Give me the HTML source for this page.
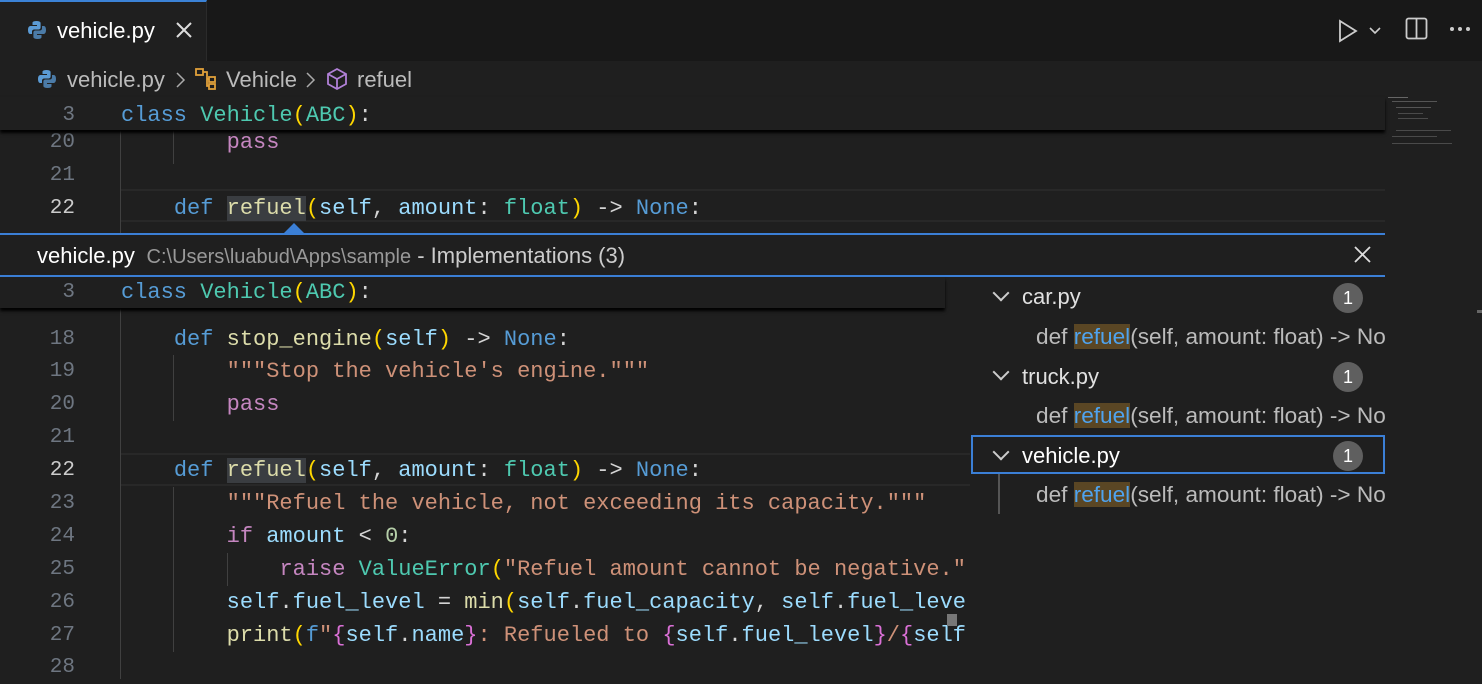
<!DOCTYPE html>
<html><head><meta charset="utf-8"><style>
*{margin:0;padding:0;box-sizing:border-box}
body{width:1482px;height:679px;background:#1f1f1f;overflow:hidden;position:relative;font-family:"Liberation Sans",sans-serif;color:#ccc}
.a{position:absolute}
.ln{position:absolute;width:75px;text-align:right;font:21px/33px "Liberation Mono",monospace;color:#6e7681;left:0}
.cd{position:absolute;left:121px;font:22px/33px "Liberation Mono",monospace;white-space:pre;color:#d4d4d4}
.k{color:#569cd6}.c{color:#4ec9b0}.f{color:#dcdcaa}.p{color:#9cdcfe}.s{color:#ce9178}.m{color:#c586c0}.y{color:#ffd700}.b{color:#da70d6}
.hl{background:#3a3d41}
.g{position:absolute;width:1px;background:#404040}
.tr{position:absolute;left:1022px;font-size:22px;color:#e0e0e0;line-height:36px}
.tc{position:absolute;left:1036px;font-size:22.6px;color:#bbb;line-height:36px;white-space:nowrap;width:349px;overflow:hidden}
.rf{color:#4fa3ee;background:#5a4624}
.bd{position:absolute;left:1333px;width:30px;height:30px;border-radius:50%;background:#5f5f5f;color:#fff;font-size:18px;text-align:center;line-height:30px}
.chev{position:absolute;left:995px;width:12px;height:12px;border-right:2px solid #ccc;border-bottom:2px solid #ccc;transform:rotate(45deg)}
.sep{position:absolute;top:72px}
</style></head><body>
<div class="a" style="left:0;top:0;width:1482px;height:61px;background:#181818"></div>
<div class="a" style="left:0;top:0;width:207px;height:61px;background:#1f1f1f;border-top:2px solid #3b82d6;border-right:1px solid #2b2b2b"></div>
<svg class="a" style="left:27px;top:20px" width="20" height="20" viewBox="0 0 20 20"><path d="M9.5 1C5 1 5.5 3 5.5 3v2h4.5v1H3.5S1 5.8 1 10s2.2 4 2.2 4H5v-2.3S4.9 9.5 7.2 9.5h4.3s2.1 0 2.1-2.1V3.2S14 1 9.5 1z" fill="#5b9bd5"/><path d="M10.5 19c4.5 0 4-2 4-2v-2H10v-1h6.5s2.5.2 2.5-4-2.2-4-2.2-4H15v2.3s.1 2.2-2.2 2.2H8.5s-2.1 0-2.1 2.1v4.2S6 19 10.5 19z" fill="#5b9bd5" opacity=".75"/></svg>
<div class="a" style="left:57px;top:18px;font-size:22px;color:#fff">vehicle.py</div>
<svg class="a" style="left:175px;top:21px" width="18" height="18"><path d="M2 2L16 16M16 2L2 16" stroke="#ddd" stroke-width="2"/></svg>
<svg class="a" style="left:1337px;top:19px" width="50" height="24"><path d="M3 2 L19 12 L3 22 Z" fill="none" stroke="#ccc" stroke-width="1.8"/><path d="M33 9 l5 5 l5 -5" fill="none" stroke="#ccc" stroke-width="1.6"/></svg>
<svg class="a" style="left:1405px;top:17px" width="24" height="24"><rect x="1.5" y="1.5" width="20" height="20" rx="2" fill="none" stroke="#ccc" stroke-width="1.8"/><line x1="11.5" y1="2" x2="11.5" y2="21" stroke="#ccc" stroke-width="1.8"/></svg>
<svg class="a" style="left:1448px;top:25px" width="26" height="8"><circle cx="4" cy="4" r="2" fill="#ccc"/><circle cx="12" cy="4" r="2" fill="#ccc"/><circle cx="20" cy="4" r="2" fill="#ccc"/></svg>
<svg class="a" style="left:37px;top:69px" width="20" height="20" viewBox="0 0 20 20"><path d="M9.5 1C5 1 5.5 3 5.5 3v2h4.5v1H3.5S1 5.8 1 10s2.2 4 2.2 4H5v-2.3S4.9 9.5 7.2 9.5h4.3s2.1 0 2.1-2.1V3.2S14 1 9.5 1z" fill="#5b9bd5"/><path d="M10.5 19c4.5 0 4-2 4-2v-2H10v-1h6.5s2.5.2 2.5-4-2.2-4-2.2-4H15v2.3s.1 2.2-2.2 2.2H8.5s-2.1 0-2.1 2.1v4.2S6 19 10.5 19z" fill="#5b9bd5" opacity=".75"/></svg>
<div class="a" style="left:67px;top:67px;font-size:22px;color:#bbb">vehicle.py</div>
<svg class="sep" style="left:175px" width="12" height="16"><path d="M2 1l7 7-7 7" fill="none" stroke="#aaa" stroke-width="1.5"/></svg>
<svg class="a" style="left:194px;top:67px" width="26" height="24"><g fill="none" stroke="#e0a03a" stroke-width="1.8"><rect x="2" y="2" width="7" height="6"/><rect x="15" y="10" width="6" height="5"/><rect x="15" y="17" width="6" height="5"/><path d="M9 5h4v14h2M13 12h2"/></g></svg>
<div class="a" style="left:226px;top:67px;font-size:22px;color:#bbb">Vehicle</div>
<svg class="sep" style="left:305px" width="12" height="16"><path d="M2 1l7 7-7 7" fill="none" stroke="#aaa" stroke-width="1.5"/></svg>
<svg class="a" style="left:326px;top:67px" width="22" height="24"><g fill="none" stroke="#b180d7" stroke-width="1.8"><path d="M11 2 L20 7 L20 17 L11 22 L2 17 L2 7 Z"/><path d="M2 7 L11 12 L20 7 M11 12 V22"/></g></svg>
<div class="a" style="left:357px;top:67px;font-size:22px;color:#bbb">refuel</div>
<div class="g" style="left:120px;top:130px;height:103px"></div>
<div class="g" style="left:173px;top:130px;height:34px"></div>
<div class="a" style="left:121px;top:189px;width:1264px;height:33px;border-top:2px solid #282828;border-bottom:2px solid #282828"></div>
<div class="ln" style="top:126px">20</div><div class="cd" style="top:126px">        <span class="m">pass</span></div>
<div class="ln" style="top:159px">21</div>
<div class="ln" style="top:192px;color:#ccc">22</div><div class="cd" style="top:192px">    <span class="k">def</span> <span class="f hl">refuel</span><span class="y">(</span><span class="p">self</span>, <span class="p">amount</span>: <span class="c">float</span><span class="y">)</span> -&gt; <span class="k">None</span>:</div>
<div class="a" style="left:0;top:97px;width:1385px;height:33px;background:#1f1f1f;box-shadow:0 3px 3px #000"></div>
<div class="ln" style="top:99px">3</div><div class="cd" style="top:99px"><span class="k">class</span> <span class="c">Vehicle</span><span class="y">(</span><span class="c">ABC</span><span class="y">)</span>:</div>
<div class="a" style="left:1388px;top:97px;width:20px;height:1px;background:#666"></div>
<div class="a" style="left:1392px;top:101px;width:45px;height:1px;background:#555"></div>
<div class="a" style="left:1396px;top:107px;width:35px;height:1px;background:#555"></div>
<div class="a" style="left:1398px;top:113px;width:25px;height:1px;background:#4a4a4a"></div>
<div class="a" style="left:1398px;top:118px;width:30px;height:1px;background:#4a4a4a"></div>
<div class="a" style="left:1396px;top:130px;width:55px;height:1px;background:#4a4a4a"></div>
<div class="a" style="left:1392px;top:136px;width:45px;height:1px;background:#4a4a4a"></div>
<div class="a" style="left:1392px;top:143px;width:60px;height:1px;background:#4a4a4a"></div>
<div class="a" style="left:0;top:233px;width:1385px;height:44px;background:#1f1f1f;border-top:2px solid #3b7fd6;border-bottom:2px solid #3b7fd6"></div>
<div class="a" style="left:284px;top:223px;width:0;height:0;border-left:10px solid transparent;border-right:10px solid transparent;border-bottom:10px solid #3b7fd6"></div>
<div class="a" style="left:37px;top:243px;font-size:22px;color:#fff;white-space:nowrap">vehicle.py <span style="color:#999;font-size:20px">&nbsp;C:\Users\luabud\Apps\sample</span> <span style="color:#ccc">- Implementations (3)</span></div>
<svg class="a" style="left:1354px;top:246px" width="17" height="17"><path d="M1 1L16 16M16 1L1 16" stroke="#ddd" stroke-width="1.8"/></svg>
<div class="a" style="left:0;top:277px;width:970px;height:402px;background:#1f1f1f"></div>
<div class="g" style="left:120px;top:308px;height:371px"></div>
<div class="g" style="left:173px;top:355px;height:66px"></div>
<div class="g" style="left:173px;top:487px;height:165px"></div>
<div class="g" style="left:227px;top:553px;height:33px"></div>
<div class="a" style="left:121px;top:453px;width:849px;height:33px;border-top:2px solid #282828;border-bottom:2px solid #282828"></div>
<div class="ln" style="top:323px">18</div><div class="cd" style="top:323px">    <span class="k">def</span> <span class="f">stop_engine</span><span class="y">(</span><span class="p">self</span><span class="y">)</span> -&gt; <span class="k">None</span>:</div>
<div class="ln" style="top:355px">19</div><div class="cd" style="top:355px">        <span class="s">"""Stop the vehicle's engine."""</span></div>
<div class="ln" style="top:388px">20</div><div class="cd" style="top:388px">        <span class="m">pass</span></div>
<div class="ln" style="top:421px">21</div>
<div class="ln" style="top:454px;color:#ccc">22</div><div class="cd" style="top:454px">    <span class="k">def</span> <span class="f hl">refuel</span><span class="y">(</span><span class="p">self</span>, <span class="p">amount</span>: <span class="c">float</span><span class="y">)</span> -&gt; <span class="k">None</span>:</div>
<div class="ln" style="top:487px">23</div><div class="cd" style="top:487px">        <span class="s">"""Refuel the vehicle, not exceeding its capacity."""</span></div>
<div class="ln" style="top:520px">24</div><div class="cd" style="top:520px">        <span class="m">if</span> <span class="p">amount</span> &lt; <span style="color:#b5cea8">0</span>:</div>
<div class="ln" style="top:553px">25</div><div class="cd" style="top:553px">            <span class="m">raise</span> <span class="c">ValueError</span><span class="y">(</span><span class="s">"Refuel amount cannot be negative."</span></div>
<div class="ln" style="top:586px">26</div><div class="cd" style="top:586px">        <span class="p">self</span>.<span class="p">fuel_level</span> = <span class="f">min</span><span class="y">(</span><span class="p">self</span>.<span class="p">fuel_capacity</span>, <span class="p">self</span>.<span class="p">fuel_leve</span></div>
<div class="ln" style="top:619px">27</div><div class="cd" style="top:619px">        <span class="f">print</span><span class="y">(</span><span class="k">f</span><span class="s">"</span><span class="b">{</span><span class="p">self</span>.<span class="p">name</span><span class="b">}</span><span class="s">: Refueled to </span><span class="b">{</span><span class="p">self</span>.<span class="p">fuel_level</span><span class="b">}</span><span class="s">/</span><span class="b">{</span><span class="p">self</span></div>
<div class="ln" style="top:651px">28</div>
<div class="a" style="left:947px;top:614px;width:10px;height:12px;background:#777"></div>
<div class="a" style="left:0;top:277px;width:945px;height:31px;background:#1f1f1f;box-shadow:0 3px 3px #000"></div>
<div class="ln" style="top:276px">3</div><div class="cd" style="top:276px"><span class="k">class</span> <span class="c">Vehicle</span><span class="y">(</span><span class="c">ABC</span><span class="y">)</span>:</div>
<div class="a" style="left:970px;top:277px;width:415px;height:402px;background:#1f1f1f"></div>
<div class="chev" style="top:287px"></div><div class="tr" style="top:279px">car.py</div><div class="bd" style="top:283px">1</div>
<div class="tc" style="top:319px">def <span class="rf">refuel</span>(self, amount: float) -&gt; None</div>
<div class="chev" style="top:366px"></div><div class="tr" style="top:359px">truck.py</div><div class="bd" style="top:362px">1</div>
<div class="tc" style="top:398px">def <span class="rf">refuel</span>(self, amount: float) -&gt; None</div>
<div class="a" style="left:971px;top:435px;width:414px;height:39px;border:2px solid #3b7fd6"></div>
<div class="chev" style="top:446px"></div><div class="tr" style="top:438px;color:#fff">vehicle.py</div><div class="bd" style="top:441px">1</div>
<div class="a" style="left:998px;top:474px;width:2px;height:40px;background:#555"></div>
<div class="tc" style="top:477px">def <span class="rf">refuel</span>(self, amount: float) -&gt; None</div>
<div class="a" style="left:1477px;top:310px;width:5px;height:3px;background:#666"></div>
</body></html>
